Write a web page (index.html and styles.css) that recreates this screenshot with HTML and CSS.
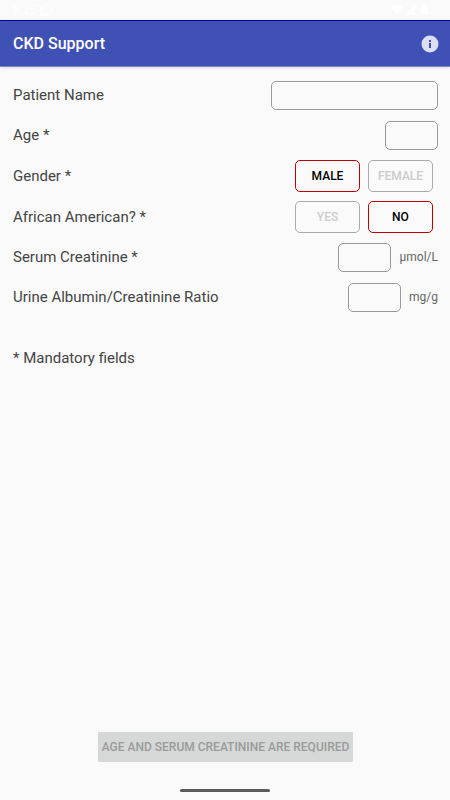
FILE: index.html
```html
<!DOCTYPE html>
<html lang="en">
<head>
<meta charset="utf-8">
<meta name="viewport" content="width=device-width, initial-scale=1">
<title>CKD Support</title>
<link rel="stylesheet" href="styles.css">
</head>
<body>
<div class="status">
  <span class="status-left">9:25
    <svg width="12" height="12" viewBox="0 0 12 12" fill="none" stroke="currentColor"><rect x="2.500" y=".5" width="9" height="9" rx="1"/><path d="M.5 3v8.500H9"/></svg>
  </span>
  <svg width="38" height="12" viewBox="0 0 38 12" fill="currentColor"><path d="M0 3Q6-2 12 3L6 11ZM14 11 24 1v10ZM30 2h2V0h3v2h2v9h-7Z"/></svg>
</div>
<header class="bar">
  <h1>CKD Support</h1>
  <button class="info" type="button" aria-label="Information">
    <svg width="18" height="18" viewBox="0 0 18 18"><circle cx="9" cy="9" r="8.500" fill="#dddff2"/><path d="M8 5h2v2H8zM8 8h2v5H8z" fill="#3f51b5"/></svg>
  </button>
</header>
<form class="form">
  <div class="row">
    <label for="name">Patient Name</label>
    <input class="field wide" id="name" type="text">
  </div>
  <div class="row">
    <label for="age">Age *</label>
    <input class="field" id="age" type="text" inputmode="numeric">
  </div>
  <div class="row options" role="group" aria-labelledby="gender">
    <span id="gender">Gender *</span>
    <div class="choices">
      <button class="choice selected" type="button" aria-pressed="true">MALE</button>
      <button class="choice" type="button" aria-pressed="false">FEMALE</button>
    </div>
  </div>
  <div class="row options" role="group" aria-labelledby="african">
    <span id="african">African American? *</span>
    <div class="choices">
      <button class="choice" type="button" aria-pressed="false">YES</button>
      <button class="choice selected" type="button" aria-pressed="true">NO</button>
    </div>
  </div>
  <div class="row">
    <label for="serum">Serum Creatinine *</label>
    <div class="measure"><input class="field" id="serum" type="text" inputmode="decimal"><span>µmol/L</span></div>
  </div>
  <div class="row">
    <label for="ratio">Urine Albumin/Creatinine Ratio</label>
    <div class="measure"><input class="field" id="ratio" type="text" inputmode="decimal"><span>mg/g</span></div>
  </div>
  <p class="note">* Mandatory fields</p>
  <button class="submit" type="submit" disabled>AGE AND SERUM CREATININE ARE REQUIRED</button>
</form>
<div class="home"></div>
</body>
</html>
```
FILE: styles.css
```css
* {
  box-sizing: border-box;
}

body {
  display: flex;
  flex-direction: column;
  min-height: 100vh;
  margin: 0;
  background: #fafafa;
  color: #444;
  font: 15px/20px Roboto, sans-serif;
}

button,
input {
  margin: 0;
  font-family: inherit;
}

.status {
  display: flex;
  align-items: center;
  justify-content: space-between;
  height: 20px;
  padding: 0 21px 0 13px;
  color: #fff;
  font-size: 12px;
}

.status-left {
  display: flex;
  align-items: center;
  gap: 4px;
}

.bar {
  display: flex;
  align-items: center;
  justify-content: space-between;
  height: 47px;
  padding: 0 11px 0 13px;
  border-top: 1px solid #0000b0;
  border-bottom: 1px solid #7d88c8;
  background: #3f51b5;
  box-shadow: 0 1px 3px rgba(0, 0, 0, 0.12);
}

h1 {
  margin: 0;
  color: #fff;
  font-size: 16px;
  font-weight: 500;
}

.info {
  display: flex;
  padding: 0;
  border: 0;
  background: none;
}

.form {
  display: flex;
  flex: 1;
  flex-direction: column;
  padding: 8px 12px 0 13px;
}

.row {
  display: flex;
  align-items: center;
  justify-content: space-between;
  min-height: 40px;
}

.options {
  min-height: 41px;
  padding: 1px 5px 0 0;
}

.field {
  width: 53px;
  height: 29px;
  padding: 0 6px;
  border: 1px solid #999;
  border-radius: 5px;
  background: transparent;
  font-size: 14px;
}

.wide {
  width: 167px;
}

.choices,
.measure {
  display: flex;
  align-items: center;
  gap: 8px;
}

.measure {
  color: #666;
  font-size: 12px;
}

.choice {
  width: 65px;
  height: 32px;
  padding: 0;
  border: 1px solid #aaa;
  border-radius: 5px;
  background: transparent;
  color: #ccc;
  font-size: 12px;
  font-weight: 500;
}

.choice.selected {
  border-color: #c00000;
  color: #000;
}

.note {
  margin: 31px 0 0;
}

.submit {
  align-self: center;
  height: 30px;
  margin-top: auto;
  padding: 0 4px;
  border: 0;
  border-radius: 1px;
  background: #d6d8d7;
  color: #999b9a;
  font-size: 12px;
  font-weight: 500;
}

.home {
  width: 90px;
  height: 3px;
  margin: 27px auto 8px;
  border-radius: 2px;
  background: #5c5c5c;
}
```
